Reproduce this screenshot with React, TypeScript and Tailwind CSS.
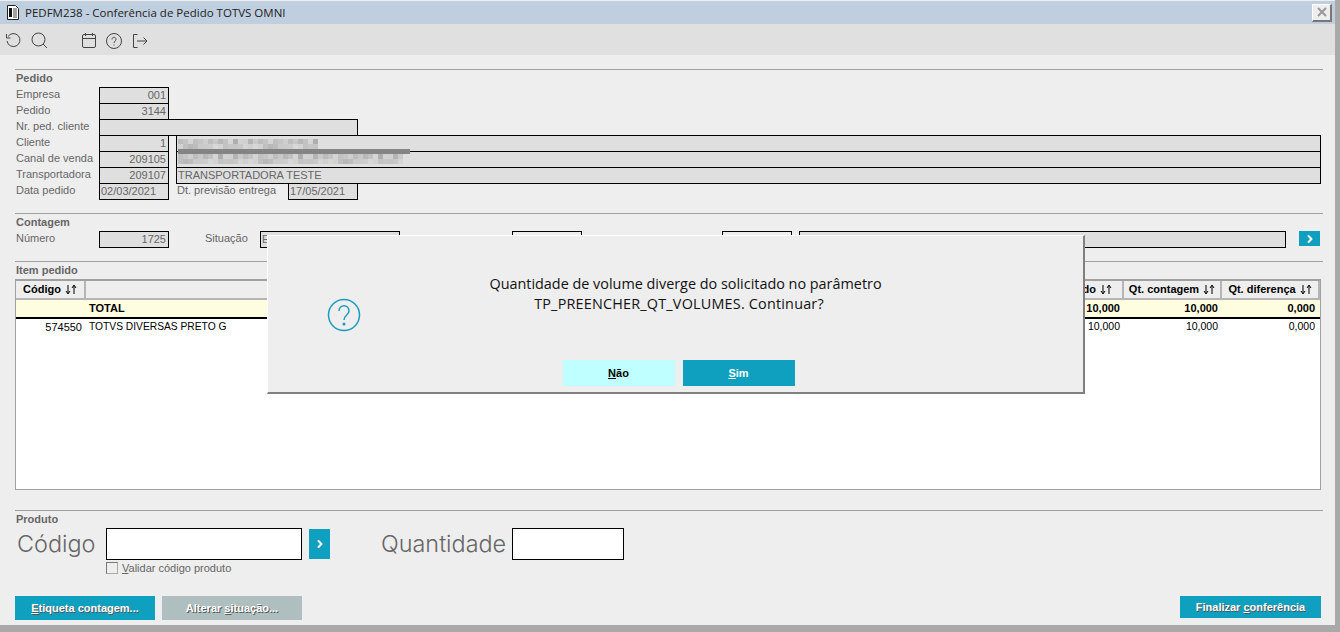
import { ChevronRight } from "lucide-react";

const grays = [
  "#bcbcbc", "#c8c8c8", "#b4b4b4", "#cecece", "#d2d2d2", "#c0c0c0", "#d6d6d6", "#c4c4c4",
  "#b8b8b8", "#cacaca", "#bebebe", "#d0d0d0", "#c6c6c6", "#aeaeae", "#d4d4d4", "#c2c2c2",
];

function Blur({ width, offset = 0 }: { width: number; offset?: number }) {
  const cells = Array.from({ length: Math.floor(width / 5) });
  return (
    <svg width={width} height={10} className="block">
      {cells.map((_, i) => (
        <rect key={i} x={i * 5} y={0} width={5} height={5} fill={grays[(i * 7 + offset) % 16]} />
      ))}
      {cells.map((_, i) => (
        <rect key={i} x={i * 5} y={5} width={5} height={5} fill={grays[(i * 5 + offset + 3) % 16]} opacity={0.8} />
      ))}
    </svg>
  );
}

function Field({ value = "", className = "", right = true }: { value?: string; className?: string; right?: boolean }) {
  return (
    <div
      className={`h-[17px] overflow-hidden whitespace-nowrap border border-black bg-[#dfdfdf] text-[11px] leading-[15px] text-[#666] ${
        right ? "px-[2px] text-right" : "px-[1px] text-left"
      } ${className}`}
    >
      {value}
    </div>
  );
}

function Row({ label, children }: { label: string; children: React.ReactNode }) {
  return (
    <div className="flex h-[16px] items-start">
      <div className="w-[83px] shrink-0 text-[11px] leading-[14px] text-[#666]">{label}</div>
      {children}
    </div>
  );
}

function Section({ title, className = "" }: { title: string; className?: string }) {
  return (
    <div className={`mr-[-4px] ${className}`}>
      <div className="h-px bg-[#a0a0a0]" />
      <div className="ml-px mt-px h-[16px] text-[11px] font-bold leading-[14px] text-[#666]">{title}</div>
    </div>
  );
}

function Sort() {
  return (
    <svg width={12} height={10} viewBox="0 0 12 10" fill="none" stroke="#000" strokeWidth={1} className="ml-[4px]">
      <path d="M3 0v8M1 6l2 3 2-3M9 9V1M7 3l2-3 2 3" />
    </svg>
  );
}

function Head({ label, className = "" }: { label: string; className?: string }) {
  return (
    <div
      className={`flex h-[19px] shrink-0 items-center justify-center border-b-2 border-r-2 border-[#b5b5b5] bg-[#eeeeee] text-[11px] font-bold text-black ${className}`}
    >
      {label}
      <Sort />
    </div>
  );
}

function ActionButton({ label, className = "" }: { label: React.ReactNode; className?: string }) {
  return (
    <button className={`flex items-center justify-center text-[11px] font-bold text-white [text-shadow:1px_1px_0_#555] ${className}`}>
      {label}
    </button>
  );
}

export default function App() {
  return (
    <div className="relative flex h-[632px] w-[1340px] flex-col overflow-hidden bg-[#a9a9a9] font-['Liberation_Sans',sans-serif]">
      <div className="h-[625px] w-[1335px] bg-[#eeeeee]">
        {/* Title bar */}
        <div className="mt-px flex h-[23px] items-center justify-between bg-[#bfcfdf] pl-[7px] pr-[3px]">
          <div className="flex items-center gap-[6px]">
            <svg width={12} height={15} viewBox="0 0 12 15">
              <path d="M.5.500h8l3 3v11H.5z" fill="#fff" stroke="#222" />
              <path d="M2 3h3v9H2z" fill="#111" />
              <path d="M6 4h4M6 6h4M6 8h4M6 10h4M6 12h4" stroke="#444" />
            </svg>
            <span className="font-['Open_Sans',sans-serif] text-[11.5px] text-[#222]">PEDFM238 - Conferência de Pedido TOTVS OMNI</span>
          </div>
          <div className="flex h-[18px] w-[20px] items-center justify-center border border-b-2 border-r-2 border-white border-b-[#777] border-r-[#777] bg-[#eeeeee]">
            <svg width={10} height={10} viewBox="0 0 10 10">
              <path d="M1 1l8 8M9 1l-8 8" stroke="#999" strokeWidth={2} />
            </svg>
          </div>
        </div>

        {/* Toolbar */}
        <div className="flex h-[31px] items-center bg-[#e0e0e0] pl-[5px] pt-[2px]">
          <svg width={17} height={17} viewBox="0 0 17 17" fill="none" stroke="#444" strokeWidth={1}>
            <path d="M3 4.500A6.500 6.500 0 1 1 2 9" />
            <path d="M1.500 2v4h4" />
          </svg>
          <svg width={17} height={17} viewBox="0 0 17 17" fill="none" stroke="#444" strokeWidth={1} className="ml-[9px]">
            <circle cx={7.500} cy={7.500} r={6.500} />
            <path d="M12 12l4 4" />
          </svg>
          <svg width={16} height={17} viewBox="0 0 16 17" fill="none" stroke="#444" strokeWidth={1} className="ml-[33px]">
            <rect x={1.500} y={2.500} width={13} height={13} rx={1.500} />
            <path d="M1.500 6.500h13M4.500 1v3M11.500 1v3" />
          </svg>
          <svg width={16} height={16} viewBox="0 0 16 16" fill="none" stroke="#444" strokeWidth={1} className="ml-[9px]">
            <circle cx={8} cy={8} r={7.500} />
            <path d="M6 6.500c0-3 4-3 4 0 0 1.500-2 1.500-2 3.500M8 11.500v1" />
          </svg>
          <svg width={16} height={16} viewBox="0 0 16 16" fill="none" stroke="#444" strokeWidth={1} className="ml-[10px]">
            <path d="M5.500 1.500h-4v13h4M5 8h10M11.500 4.500l3.500 3.500-3.500 3.500" />
          </svg>
        </div>

        {/* Content */}
        <div className="pl-[15px] pr-[16px]">
          <Section title="Pedido" className="mt-[14px]" />
          <div className="mr-[-4px] pl-px">
            <Row label="Empresa"><Field value="001" className="w-[70px]" /></Row>
            <Row label="Pedido"><Field value="3144" className="w-[70px]" /></Row>
            <Row label="Nr. ped. cliente"><Field className="w-[259px]" /></Row>
            <Row label="Cliente">
              <Field value="1" className="w-[70px]" />
              <div className="ml-[7px] h-[17px] w-[1145px] border border-black bg-[#dfdfdf] pl-px pt-[3px]">
                <Blur width={143} />
              </div>
            </Row>
            <Row label="Canal de venda">
              <Field value="209105" className="w-[70px]" />
              <div className="relative ml-[7px] h-[17px] w-[1145px] border border-black bg-[#dfdfdf] pl-px pt-[2px]">
                <div className="absolute left-px top-[-3px] h-[5px] w-[232px] bg-[#848484]" />
                <Blur width={228} offset={5} />
              </div>
            </Row>
            <Row label="Transportadora">
              <Field value="209107" className="w-[70px]" />
              <Field value="TRANSPORTADORA TESTE" right={false} className="ml-[7px] w-[1145px] text-[10.25px]" />
            </Row>
            <Row label="Data pedido">
              <Field value="02/03/2021" right={false} className="w-[70px] text-[10.5px]" />
              <div className="ml-[8px] w-[111px] text-[11px] leading-[14px] text-[#666]">Dt. previsão entrega</div>
              <Field value="17/05/2021" right={false} className="w-[70px] text-[10.5px]" />
            </Row>
          </div>

          <Section title="Contagem" className="mt-[14px]" />
          <div className="mr-[-4px] flex h-[17px] items-start pl-px">
            <div className="w-[83px] text-[11px] leading-[14px] text-[#666]">Número</div>
            <Field value="1725" className="w-[70px] border-[#444]" />
            <div className="ml-[36px] w-[55px] text-[11px] leading-[14px] text-[#666]">Situação</div>
            <Field value="EM ANDAMENTO" right={false} className="w-[140px] border-[#666]" />
            <div className="ml-[112px] h-[17px] w-[70px] border border-black" />
            <div className="ml-[140px] h-[17px] w-[70px] border border-black" />
            <Field className="ml-[7px] w-[487px]" />
            <div className="ml-[13px] flex h-[15px] w-[21px] items-center justify-center bg-[#0fa0c0] text-white">
              <ChevronRight size={12} strokeWidth={4} />
            </div>
          </div>

          <Section title="Item pedido" className="mt-[13px]" />

          {/* Grid */}
          <div className="h-[211px] w-[1306px] border-x border-b border-t-2 border-[#a0a0a0] bg-white">
            <div className="flex bg-[#eeeeee]">
              <Head label="Código" className="w-[70px]" />
              <Head label="Qt. pedido" className="w-[1038px] justify-end pr-[10px]" />
              <Head label="Qt. contagem" className="w-[98px]" />
              <Head label="Qt. diferença" className="flex-1 border-r-0" />
            </div>
            <div className="flex h-[19px] items-center border-b-2 border-black bg-[#fffde0] text-[11px] font-bold text-black">
              <div className="w-[70px]" />
              <div className="flex w-[1038px] justify-between pl-[3px] pr-[4px]"><span>TOTAL</span><span>10,000</span></div>
              <div className="w-[98px] pr-[4px] text-right">10,000</div>
              <div className="flex-1 pr-[5px] text-right">0,000</div>
            </div>
            <div className="flex h-[16px] items-center text-[10.5px] text-black">
              <div className="w-[70px] pr-[4px] text-right text-[11px]">574550</div>
              <div className="flex w-[1038px] items-center justify-between pl-[3px] pr-[4px]"><span className="text-[10.25px]">TOTVS DIVERSAS PRETO G</span><span>10,000</span></div>
              <div className="w-[98px] pr-[4px] text-right">10,000</div>
              <div className="flex-1 pr-[5px] text-right">0,000</div>
            </div>
          </div>

          <Section title="Produto" className="mt-[20px]" />
          <div className="flex h-[32px] items-center">
            <div className="w-[91px] pl-[2px] font-['Inter',sans-serif] text-[23.4px] font-light text-[#666]">Código</div>
            <div className="h-[32px] w-[196px] border border-black bg-white" />
            <div className="ml-[7px] flex h-[30px] w-[21px] items-center justify-center bg-[#0fa0c0] text-white">
              <ChevronRight size={12} strokeWidth={4} />
            </div>
            <div className="ml-[51px] w-[131px] font-['Inter',sans-serif] text-[23.4px] font-light text-[#666]">Quantidade</div>
            <div className="h-[32px] w-[112px] border border-black bg-white" />
          </div>
          <div className="ml-[91px] mt-px flex h-[13px] items-center">
            <div className="h-[12px] w-[12px] border border-[#aaa] border-l-[#777] border-t-[#777]" />
            <span className="ml-[4px] pt-px text-[11px] text-[#666]"><u>V</u>alidar código produto</span>
          </div>

          <div className="mt-[22px] flex items-start">
            <ActionButton label={<span><u>E</u>tiqueta contagem...</span>} className="h-[24px] w-[140px] bg-[#0fa0c0]" />
            <ActionButton label={<span>Alterar <u>s</u>ituação...</span>} className="ml-[7px] h-[24px] w-[140px] bg-[#afbfbf]" />
            <ActionButton label={<span>Finalizar <u>c</u>onferência</span>} className="ml-auto mr-[-2px] h-[22px] w-[141px] bg-[#0fa0c0]" />
          </div>
        </div>
      </div>

      {/* Dialog */}
      <div className="absolute left-[267px] top-[235px] flex h-[159px] w-[818px] flex-col border-b-2 border-l border-r-2 border-t border-[#808080] border-l-white border-t-white bg-[#eeeeee]">
        <div className="relative flex-1">
          <svg width={34} height={34} viewBox="0 0 34 34" fill="none" stroke="#1a9cc0" strokeWidth={1.500} className="absolute left-[59px] top-[62px]">
            <circle cx={17} cy={17} r={15.500} />
            <path d="M12 13c0-7 10-7 10 0 0 4-5 4-5 9" />
            <circle cx={17} cy={26} r={0.800} fill="#1a9cc0" />
          </svg>
          <div className="pl-[20px] pt-[38px] text-center font-['Open_Sans',sans-serif] text-[14.4px] leading-[20px] text-[#111]">
            Quantidade de volume diverge do solicitado no parâmetro
            <br />
            <span className="mr-[13px] inline-block tracking-[0.2px]">TP_PREENCHER_QT_VOLUMES. Continuar?</span>
          </div>
        </div>
        <div className="mb-[6px] flex justify-center gap-[8px] pl-[6px]">
          <button className="flex h-[26px] w-[112px] items-center justify-center bg-[#bfffff] text-[11px] font-bold text-black"><span><u>N</u>ão</span></button>
          <button className="flex h-[26px] w-[112px] items-center justify-center bg-[#0fa0c0] text-[11px] font-bold text-white"><span><u>S</u>im</span></button>
        </div>
      </div>
    </div>
  );
}
